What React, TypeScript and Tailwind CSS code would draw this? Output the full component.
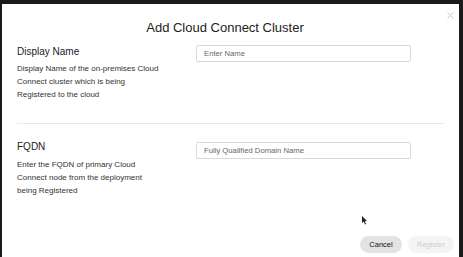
import React from "react";

export default function App() {
  return (
    <div className="w-[463px] h-[257px] bg-[#1a1a1a] pt-[4px] pl-[2px] pr-[4px] overflow-hidden" style={{ fontFamily: '"Liberation Sans", Arial, sans-serif' }}>
      <div className="relative h-[253px] bg-white flex flex-col">
        <svg className="absolute right-[5px] top-[8px]" width="7" height="7" viewBox="0 0 7 7">
          <path d="M0.5 0.5 L6.5 6.5 M6.5 0.5 L0.5 6.5" stroke="#c8c8c8" strokeWidth="1" />
        </svg>
        <svg className="absolute left-[360px] top-[212px]" width="6" height="9" viewBox="0 0 6 9">
          <path d="M0 0 L0 7 L1.8 5.5 L3 8.5 L4 8 L2.8 5.2 L5 5 Z" fill="#222" />
        </svg>
        <div className="text-center text-[13px] text-[#222] pt-[14px] leading-[20px] pr-[11px]">Add Cloud Connect Cluster</div>
        <div className="flex px-[15px] pt-[7px]">
          <div className="w-[179px]">
            <div className="text-[10px] text-[#222] leading-[14px]">Display Name</div>
            <div className="text-[8px] text-[#333] leading-[13px] pt-[3px]">
              Display Name of the on-premises Cloud<br />Connect cluster which is being<br />Registered to the cloud
            </div>
          </div>
          <div className="w-[215px] h-[17px] border border-[#d9d9d9] rounded-[2px] text-[7.7px] text-[#666] pl-[7px] leading-[15px]">Enter Name</div>
        </div>
        <div className="mx-[15px] mt-[22px] h-px bg-[#e8e8e8]" />
        <div className="flex px-[15px] pt-[16px]">
          <div className="w-[179px]">
            <div className="text-[10px] text-[#222] leading-[14px]">FQDN</div>
            <div className="text-[8px] text-[#333] leading-[13px] pt-[4px]">
              Enter the FQDN of primary Cloud<br />Connect node from the deployment<br />being Registered
            </div>
          </div>
          <div className="mt-[2px] w-[215px] h-[17px] border border-[#d9d9d9] rounded-[2px] text-[7.7px] text-[#666] pl-[7px] leading-[15px]">Fully Qualified Domain Name</div>
        </div>
        <div className="flex-1" />
        <div className="flex justify-end gap-[6px] pr-[5px] pb-[4px]">
          <div className="w-[42px] h-[17px] rounded-full bg-[#e3e3e3] text-[7.5px] font-medium text-[#111] flex items-center justify-center">Cancel</div>
          <div className="w-[46px] h-[17px] rounded-full bg-[#f4f4f4] text-[7.5px] text-[#cfcfcf] flex items-center justify-center">Register</div>
        </div>
      </div>
    </div>
  );
}
